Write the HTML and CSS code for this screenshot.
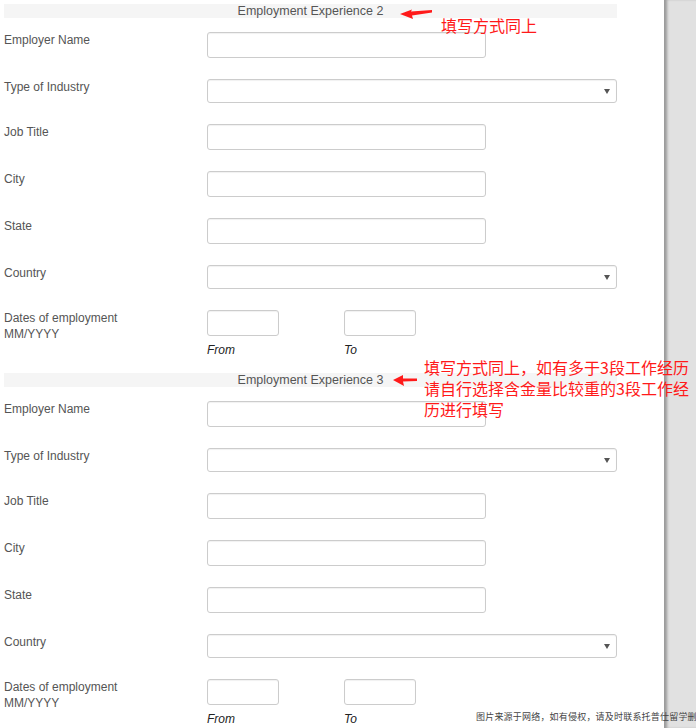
FILE: index.html
```html
<!DOCTYPE html>
<html lang="en">
<head>
    <meta charset="UTF-8">
    <title>Employment Experience</title>
    <link rel="stylesheet" href="styles.css">
</head>
<body>
    <div class="page">
        <div class="sheet">
            <div class="section">
                <div class="section-title">Employment Experience 2</div>
                <div class="row">
                    <div class="label">Employer Name</div>
                    <input class="text-input" type="text">
                </div>
                <div class="row">
                    <div class="label">Type of Industry</div>
                    <div class="select-wrap"><select class="select-input"><option></option></select></div>
                </div>
                <div class="row">
                    <div class="label">Job Title</div>
                    <input class="text-input" type="text">
                </div>
                <div class="row">
                    <div class="label">City</div>
                    <input class="text-input" type="text">
                </div>
                <div class="row">
                    <div class="label">State</div>
                    <input class="text-input" type="text">
                </div>
                <div class="row">
                    <div class="label">Country</div>
                    <div class="select-wrap"><select class="select-input"><option></option></select></div>
                </div>
                <div class="row row-dates">
                    <div class="label">Dates of employment<br>MM/YYYY</div>
                    <div class="dates">
                        <div class="date-col">
                            <input class="date-input" type="text">
                            <div class="caption">From</div>
                        </div>
                        <div class="date-col">
                            <input class="date-input" type="text">
                            <div class="caption">To</div>
                        </div>
                    </div>
                </div>
            </div>

            <div class="section">
                <div class="section-title">Employment Experience 3</div>
                <div class="row">
                    <div class="label">Employer Name</div>
                    <input class="text-input" type="text">
                </div>
                <div class="row">
                    <div class="label">Type of Industry</div>
                    <div class="select-wrap"><select class="select-input"><option></option></select></div>
                </div>
                <div class="row">
                    <div class="label">Job Title</div>
                    <input class="text-input" type="text">
                </div>
                <div class="row">
                    <div class="label">City</div>
                    <input class="text-input" type="text">
                </div>
                <div class="row">
                    <div class="label">State</div>
                    <input class="text-input" type="text">
                </div>
                <div class="row">
                    <div class="label">Country</div>
                    <div class="select-wrap"><select class="select-input"><option></option></select></div>
                </div>
                <div class="row row-dates">
                    <div class="label">Dates of employment<br>MM/YYYY</div>
                    <div class="dates">
                        <div class="date-col">
                            <input class="date-input" type="text">
                            <div class="caption">From</div>
                        </div>
                        <div class="date-col">
                            <input class="date-input" type="text">
                            <div class="caption">To</div>
                        </div>
                    </div>
                </div>
            </div>
        </div>
        <div class="side"></div>

        <!-- red notes drawn on top of the screenshot -->
        <svg class="arrow arrow-one" width="36" height="16" viewBox="0 0 36 16">
            <polygon points="2,8 14,3.5 13,5.5 34,4 34,6.5 14,9.5 15,13" fill="#ff1a1a"/>
        </svg>
        <div class="note note-one">填写方式同上</div>

        <svg class="arrow arrow-two" width="28" height="16" viewBox="0 0 28 16">
            <polygon points="2,8 12,3 12,6.5 26,6.5 26,9 12,9.5 13,14" fill="#ff1a1a"/>
        </svg>
        <div class="note note-two">填写方式同上，如有多于3段工作经历<br>请自行选择含金量比较重的3段工作经<br>历进行填写</div>

        <div class="watermark">图片来源于网络，如有侵权，请及时联系托普仕留学删除</div>
    </div>
</body>
</html>
```

FILE: styles.css
```css
body {
    margin: 0;
    padding: 0;
    background-color: #fff;
    font-family: "Liberation Sans", Arial, sans-serif;
    overflow: hidden;
}

.page {
    position: relative;
    display: flex;
    width: 696px;
    height: 728px;
    overflow: hidden;
}

.sheet {
    width: 660px;
    padding: 4px 0 0 4px;
    background-color: #fff;
}

.side {
    flex: 1;
    background-color: #e1e1e1;
    box-shadow: inset 4px 0 3px -1px #9a9a9a;
}

.section-title {
    width: 613px;
    height: 14px;
    line-height: 14px;
    margin-bottom: 14px;
    background-color: #f5f5f5;
    color: #555;
    font-size: 12.5px;
    text-align: center;
}

.row {
    display: flex;
    align-items: flex-start;
    margin-bottom: 21px;
}

.row-dates {
    margin-bottom: 15px;
}

.label {
    width: 203px;
    flex-shrink: 0;
    font-size: 12px;
    line-height: 16px;
    color: #555;
}

.text-input,
.date-input,
.select-input {
    box-sizing: border-box;
    margin: 0;
    border: 1px solid #ccc;
    border-radius: 3px;
    background-color: #fff;
    box-shadow: inset 0 1px 1px rgba(0, 0, 0, 0.06);
    font-family: inherit;
    font-size: 12px;
    outline: none;
}

.text-input {
    width: 279px;
    height: 26px;
}

.select-wrap {
    position: relative;
    width: 410px;
    height: 24px;
}

.select-wrap::after {
    content: "";
    position: absolute;
    right: 7px;
    top: 10px;
    border-left: 3px solid transparent;
    border-right: 3px solid transparent;
    border-top: 5px solid #555;
}

.select-input {
    width: 410px;
    height: 24px;
    appearance: none;
    -webkit-appearance: none;
}

.dates {
    display: flex;
}

.date-col {
    width: 137px;
}

.date-input {
    width: 72px;
    height: 26px;
}

.caption {
    margin-top: 7px;
    font-size: 12px;
    line-height: 15px;
    font-style: italic;
    color: #222;
}

.arrow {
    position: absolute;
    z-index: 2;
}

.arrow-one {
    left: 398px;
    top: 6px;
}

.arrow-two {
    left: 391px;
    top: 372px;
}

.note {
    position: absolute;
    z-index: 2;
    color: #ff1a1a;
    font-family: "Noto Sans CJK SC", "Liberation Sans", sans-serif;
    font-size: 16px;
    line-height: 21px;
    white-space: nowrap;
}

.note-one {
    left: 441px;
    top: 15px;
}

.note-two {
    left: 424px;
    top: 357px;
}

.watermark {
    position: absolute;
    z-index: 2;
    left: 476px;
    top: 710px;
    font-family: "Noto Sans CJK SC", sans-serif;
    font-size: 9px;
    line-height: 14px;
    letter-spacing: 0.2px;
    color: #444;
    white-space: nowrap;
}
```
